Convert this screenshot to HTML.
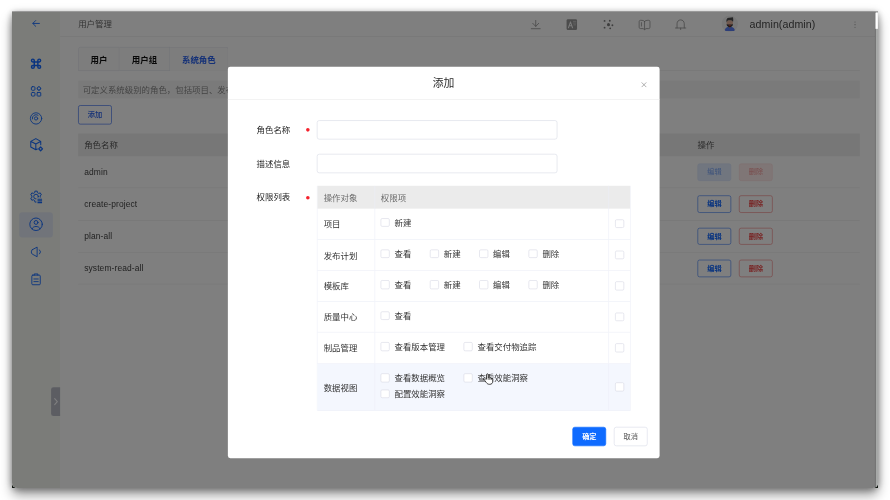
<!DOCTYPE html>
<html lang="zh-CN">
<head>
<meta charset="utf-8">
<title>用户管理</title>
<style>
*{box-sizing:border-box;margin:0;padding:0}
html,body{width:890px;height:500px;overflow:hidden;background:#fff}
body{font-family:"Liberation Sans","Noto Sans CJK SC",sans-serif;position:relative}
.win{will-change:transform;position:absolute;left:12px;top:12px;width:865.8px;height:475.8px;overflow:hidden;border-radius:0 0 5px 5px;
 box-shadow:0 7px 12px rgba(0,0,0,.40),0 1px 6px rgba(0,0,0,.26),0 0 10px rgba(0,0,0,.14);background:#fff}
.app{position:absolute;left:0;top:0;width:1440px;height:792px;transform:scale(.6013);transform-origin:0 0;font-size:14px;color:#333;background:#fff}
.abs{position:absolute}
.side{position:absolute;left:0;top:0;width:80px;height:792px;background:#f6f9f2}
.topbar{position:absolute;left:80px;top:0;width:1360px;height:41px;border-bottom:1px solid #ececec;background:#fff}
.title{position:absolute;left:30px;top:0;line-height:40px;color:#666;font-size:14px}
.tabs{position:absolute;left:110px;top:57px;height:41px;width:1300px;border-bottom:1px solid #e9e9e9}
.tab{position:absolute;top:.5px;height:40.5px;line-height:40px;text-align:center;font-weight:bold;color:#111;background:#fafafa;border:1px solid #e4e6ee;font-size:14px}
.info{position:absolute;left:110px;top:114px;width:1300px;height:30px;line-height:30px;background:#f5f5f5;color:#888;padding-left:7.5px;border-radius:2px}
.btn{position:absolute;height:32px;line-height:30px;text-align:center;border:1.3px solid;border-radius:3.5px;font-size:12px;font-weight:500}
.th{position:absolute;left:110px;top:202px;width:1300px;height:38px;background:#efefef;color:#555}
.row{position:absolute;left:110px;width:1300px;height:53.3px;border-bottom:1px solid #ececec;color:#444}
.row span,.th span{position:absolute;left:10px;top:0;line-height:53px}
.row span{letter-spacing:.2px}
.th span{line-height:38px}
.sbtn{position:absolute;top:12.2px;height:28.6px;width:56.4px;line-height:26px;text-align:center;border:1.3px solid;border-radius:3.5px;font-size:12px;font-weight:bold}
.sbtn.e{left:1030px;color:#1469ff;border-color:#3b7bf5}
.sbtn.d{left:1099px;color:#f04848;border-color:#f08080}
.sbtn.e.dis{background:#e3edff;border-color:#d5e3fb;color:#8ab0f8;font-weight:500}
.sbtn.d.dis{background:#ffecec;border-color:#fbdcdc;color:#f4a4a4;font-weight:500}
.mask{position:absolute;left:0;top:0;width:1440px;height:792px;background:rgba(0,0,0,.5)}
.modal{position:absolute;left:358.7px;top:91.3px;width:718.2px;height:650.6px;background:#fff;border-radius:4px}
.mhead{position:absolute;left:0;top:0;width:100%;height:55px;border-bottom:1px solid #ececec;text-align:center;line-height:54.6px;font-size:18px;color:#2a2a2a}
.lab{position:absolute;left:48px;width:60px;line-height:22px;color:#222}
.dot{position:absolute;left:130.5px;width:6px;height:6px;margin-top:-.5px;border-radius:50%;background:#f5222d}
.inp{position:absolute;left:148.6px;width:400px;height:32px;border:1px solid #d9dbe6;border-radius:4px;background:#fff}

.mt{position:absolute;left:148.6px;top:198.1px;width:521.6px;border-left:1px solid #eef0f8;border-right:1px solid #eef0f8}
.mr{position:relative;width:100%;border-bottom:1px solid #eceef7;height:51.55px}
.mr.h{height:37.6px;background:#ebebeb;color:#6b6b6b;border-bottom:0}
.mr.hv{background:#f4f7fe;height:78.6px}
.c1{position:absolute;left:0;top:0;bottom:0;width:95.5px;border-right:1px solid #eceef7;padding-left:10px;display:flex;align-items:center}
.c2{position:absolute;left:95.5px;top:0;bottom:0;width:389px;padding-left:9.6px;display:flex;align-items:center;flex-wrap:wrap;align-content:center}
.c3{position:absolute;left:484px;top:0;bottom:0;right:0;border-left:1px solid #eceef7;display:flex;align-items:center;justify-content:center}
.it{display:inline-flex;align-items:center;margin-right:31.2px;height:26.3px;position:relative;top:-2px;color:#333}
.it .cb{margin-right:8.5px}
.cb{display:inline-block;width:14.3px;height:14.3px;border:1px solid #d6d9e4;border-radius:2.5px;background:#fff;flex:none}
.mbtn{position:absolute;top:598.6px;height:32px;line-height:30px;text-align:center;border-radius:4px;font-size:12px;border:1px solid}
</style>
</head>
<body>
<div class="abs" style="left:12px;top:482.8px;width:5px;height:5px;background:#1c241c"></div>
<div class="abs" style="left:872.8px;top:482.8px;width:5px;height:5px;background:#1c241c"></div>
<div class="abs" style="left:12px;top:11.4px;width:865.8px;height:1px;background:rgba(0,0,0,.28)"></div>
<div class="win">
<div class="app">
  <div class="side">
<svg class="abs" style="left:26.4px;top:5.4px" width="28" height="28" viewBox="-14 -14 28 28" fill="none" stroke="#1469ff" stroke-width="1.5" stroke-linecap="round" stroke-linejoin="round"><path d="M5.6 0H-5.2M-0.6 -4.8L-5.4 0L-0.6 4.8"/></svg>
<svg class="abs" style="left:26px;top:72.4px" width="28" height="28" viewBox="-14 -14 28 28" fill="none" stroke="#1469ff" stroke-width="1.6" stroke-linecap="round" stroke-linejoin="round"><path d="M-3 -5.3A2.3 2.3 0 1 0 -5.3 -3H5.3A2.3 2.3 0 1 0 3 -5.3V5.3A2.3 2.3 0 1 0 5.3 3H-5.3A2.3 2.3 0 1 0 -3 5.3Z" stroke-width="2.4"/></svg>
<svg class="abs" style="left:26px;top:118.3px" width="28" height="28" viewBox="-14 -14 28 28" fill="none" stroke="#1469ff" stroke-width="1.6" stroke-linecap="round" stroke-linejoin="round"><rect x="-7.8" y="-7.8" width="6" height="6" rx="1.7"/><rect x="-7.8" y="1.8" width="6" height="6" rx="1.7"/><rect x="1.8" y="1.8" width="6" height="6" rx=".8"/><rect x="2.3" y="-7.3" width="5" height="5" rx="1" transform="rotate(45 4.8 -4.8)"/></svg>
<svg class="abs" style="left:26px;top:162.6px" width="28" height="28" viewBox="-14 -14 28 28" fill="none" stroke="#1469ff" stroke-width="1.5" stroke-linecap="round" stroke-linejoin="round"><circle r="9.4"/><circle r="2.7"/><path d="M-6.2 0.8A6.3 6.3 0 0 1 3.2 -5.4"/></svg>
<svg class="abs" style="left:26px;top:206.4px" width="28" height="28" viewBox="-14 -14 28 28" fill="none" stroke="#1469ff" stroke-width="1.7" stroke-linecap="round" stroke-linejoin="round"><path d="M7.8 0.8V-4.9L-0.4 -9.5L-8.8 -4.9V4.6L-0.4 9.2L2.2 7.8M-8.4 -4.6L-0.4 -0.6L7.4 -4.6M-0.4 -0.6V9"/><path d="M7.6 4.4L10.8 7.6L7.6 10.8L4.4 7.6Z" stroke-width="2.1"/></svg>
<svg class="abs" style="left:26px;top:293px" width="28" height="28" viewBox="-14 -14 28 28" fill="none" stroke="#1469ff" stroke-width="1.6" stroke-linecap="round" stroke-linejoin="round"><path d="M2.16 6.66 L1.93 9.10 L-1.93 9.10 L-2.16 6.66 L-4.68 5.20 L-6.91 6.22 L-8.84 2.87 L-6.85 1.46 L-6.85 -1.46 L-8.84 -2.87 L-6.91 -6.22 L-4.68 -5.20 L-2.16 -6.66 L-1.93 -9.10 L1.93 -9.10 L2.16 -6.66 L4.68 -5.20 L6.91 -6.22 L8.84 -2.87 L6.85 -1.46 L6.85 1.46 L8.84 2.87 L6.91 6.22 L4.68 5.20Z"/><circle r="3.9"/><rect x="0.6" y="1.6" width="12" height="12" fill="#f6f9f2" stroke="none"/><path d="M2.4 4.4H10M2.4 7.2H10M2.4 10H10" stroke-width="1.9" stroke-linecap="butt"/></svg>
<div class="abs" style="left:11.8px;top:333px;width:56.4px;height:41.6px;border-radius:5px;background:#e3e9f4"></div>
<svg class="abs" style="left:26px;top:339.2px" width="28" height="28" viewBox="-14 -14 28 28" fill="none" stroke="#1469ff" stroke-width="1.6" stroke-linecap="round" stroke-linejoin="round"><circle r="10.4"/><circle cy="-3" r="3.2"/><path d="M-6.6 7.6C-5.6 2.2 5.6 2.2 6.6 7.6"/></svg>
<svg class="abs" style="left:27.4px;top:385px" width="28" height="28" viewBox="-14 -14 28 28" fill="none" stroke="#1469ff" stroke-width="1.5" stroke-linecap="round" stroke-linejoin="round"><path d="M-7.4 -3.6L0.8 -8V8L-7.4 3.6C-9.4 2.4 -9.4 -2.4 -7.4 -3.6Z"/><path d="M4.8 -3.4A4.6 4.6 0 0 1 4.8 3.4"/></svg>
<svg class="abs" style="left:26px;top:430.7px" width="28" height="28" viewBox="-14 -14 28 28" fill="none" stroke="#1469ff" stroke-width="1.5" stroke-linecap="round" stroke-linejoin="round"><rect x="-7" y="-7.4" width="14" height="16" rx="1.6"/><path d="M-3 -7.4V-9.4H3V-7.4" /><path d="M-3.6 -1H3.6M-3.6 3.4H3.6"/></svg>
<div class="abs" style="left:65px;top:624px;width:15px;height:48px;border-radius:4px 0 0 4px;background:#b9bbc5"></div>
<svg class="abs" style="left:67px;top:640px" width="12" height="16" viewBox="0 0 12 16" fill="none" stroke="#fff" stroke-width="1.7" stroke-linecap="round" stroke-linejoin="round"><path d="M4 3L8.4 8L4 13"/></svg>
</div>
  <div class="topbar"><div class="title">用户管理</div>
<svg class="abs" style="left:776.5px;top:6.5px" width="28" height="28" viewBox="-14.0 -14.0 28 28" fill="none" stroke="#8e8e8e" stroke-width="1.3" stroke-linecap="round" stroke-linejoin="round"><path d="M0 -7V2.8M-5 -2.2L0 3L5 -2.2M-7.4 6.8H7.4"/></svg>
<svg class="abs" style="left:837.4px;top:6.7px" width="28" height="28" viewBox="-14.0 -14.0 28 28" fill="none" stroke="#8e8e8e" stroke-width="1.3" stroke-linecap="round" stroke-linejoin="round"><rect x="-8.7" y="-8.9" width="17.4" height="17.8" rx="2.2" fill="#989898" stroke="none"/><path d="M-5.6 5.2L-2.2 -4.6L1.2 5.2M-4.4 2H0" stroke="#f4f4f4" stroke-width="1.7"/><path d="M2.6 -5.4H6.8M2.6 -2.6H6.8M3.4 0.4H6.4" stroke="#d8d8d8" stroke-width="1.1"/></svg>
<svg class="abs" style="left:898.0px;top:7.100000000000001px" width="28" height="28" viewBox="-14.0 -14.0 28 28" fill="none" stroke="#8e8e8e" stroke-width="1.3" stroke-linecap="round" stroke-linejoin="round"><circle r="2.5" fill="#7c7c7c" stroke="none"/><circle cx="-6.5" cy="-6.2" r="1.55" fill="#7c7c7c" stroke="none"/><circle cx="2.2" cy="-6.5" r="1.55" fill="#7c7c7c" stroke="none"/><circle cx="6.5" cy="1" r="1.55" fill="#7c7c7c" stroke="none"/><circle cx="2.8" cy="6.2" r="1.55" fill="#7c7c7c" stroke="none"/><circle cx="-6.5" cy="5" r="1.55" fill="#7c7c7c" stroke="none"/></svg>
<svg class="abs" style="left:957.9000000000001px;top:6.800000000000001px" width="28" height="28" viewBox="-14.0 -14.0 28 28" fill="none" stroke="#8e8e8e" stroke-width="1.25" stroke-linecap="round" stroke-linejoin="round"><path d="M0 -5.4C-1 -6.8 -3 -7.2 -6.6 -7.2C-8.2 -7.2 -9 -6.4 -9 -5V4.4C-9 5.8 -8.2 6.6 -6.6 6.6H-2.4L0 8.4L2.4 6.6H6.6C8.2 6.6 9 5.8 9 4.4V-5C9 -6.4 8.2 -7.2 6.6 -7.2C3 -7.2 1 -6.8 0 -5.4ZM0 -5.4V8M-5.2 -3.4V2.4"/></svg>
<svg class="abs" style="left:1018.0999999999999px;top:7.0px" width="28" height="28" viewBox="-14.0 -14.0 28 28" fill="none" stroke="#8e8e8e" stroke-width="1.3" stroke-linecap="round" stroke-linejoin="round"><path d="M-6 5.4V-1.4C-6 -5.4 -3.4 -7.8 0 -7.8C3.4 -7.8 6 -5.4 6 -1.4V5.4M-8.6 5.6H8.6M0 5.8V8.2"/></svg>
<svg class="abs" style="left:1100.4px;top:5.8px" width="27.4" height="27.4" viewBox="-13.7 -13.7 27.4 27.4"><defs><clipPath id="av"><circle r="13.7"/></clipPath></defs><circle r="13.7" fill="#f1f1f1"/><g clip-path="url(#av)"><path d="M-8.6 12C-8 6.6 -4.6 5 0 5C4.6 5 8 6.6 8.6 12Z" fill="#5a7cf0"/><path d="M-1.8 4.6H1.8L0 7.4Z" fill="#e89a4a"/><rect x="-5.2" y="-6" width="10.4" height="9.4" rx="3.6" fill="#e2b29c"/><path d="M-5.4 -2.4C-6.4 -7 -4.6 -10.4 -1 -10.2L5.4 -10.8C6 -8.2 6 -5.2 5.4 -2.6C4.8 -5 3.2 -6 0 -6C-3.2 -6 -4.8 -5 -5.4 -2.4Z" fill="#4c4c4e"/><path d="M-5.2 0.4C-5.2 4 -3 5.6 0 5.6C3 5.6 5.2 4 5.2 0.4C3.6 1.6 -3.6 1.6 -5.2 0.4Z" fill="#3a3a3c"/><rect x="-2" y="2" width="4" height="1.4" rx=".7" fill="#c8322c"/></g></svg>
<div class="abs" style="left:1146.7px;top:0;line-height:41.5px;font-size:17.7px;color:#4a4a4a;letter-spacing:.1px">admin(admin)</div>
<svg class="abs" style="left:1308.1px;top:7.399999999999999px" width="28" height="28" viewBox="-14.0 -14.0 28 28" fill="none" stroke="#8e8e8e" stroke-width="1.3" stroke-linecap="round" stroke-linejoin="round"><circle cy="-4.4" r="1" fill="#a0a0a0" stroke="none"/><circle r="1" fill="#a0a0a0" stroke="none"/><circle cy="4.4" r="1" fill="#a0a0a0" stroke="none"/></svg>
</div>
  <div class="tabs">
    <div class="tab" style="left:0;width:69px;border-radius:4px 0 0 0">用户</div>
    <div class="tab" style="left:69px;width:83.5px;border-left:0">用户组</div>
    <div class="tab" style="left:152.5px;width:97.5px;border-left:0;color:#2a62ee;border-bottom-color:#fafafa;border-radius:0 4px 0 0">系统角色</div>
  </div>
  <div class="info">可定义系统级别的角色，包括项目、发布计划、模板库等的权限</div>
  <div class="btn" style="left:110px;top:155px;width:56px;color:#2a62ee;border-color:#2a62ee;background:#fff">添加</div>
  <div class="th"><span>角色名称</span><span style="left:1030px">操作</span></div>
  <div class="row" style="top:240px"><span>admin</span><div class="sbtn e dis">编辑</div><div class="sbtn d dis">删除</div></div>
  <div class="row" style="top:293.3px"><span>create-project</span><div class="sbtn e">编辑</div><div class="sbtn d">删除</div></div>
  <div class="row" style="top:346.6px"><span>plan-all</span><div class="sbtn e">编辑</div><div class="sbtn d">删除</div></div>
  <div class="row" style="top:399.9px"><span>system-read-all</span><div class="sbtn e">编辑</div><div class="sbtn d">删除</div></div>
  <div class="mask"></div>
  <div class="modal">
    <div class="mhead">添加</div>

    <div class="lab" style="top:93.9px">角色名称</div><div class="dot" style="top:102.5px"></div>
    <div class="inp" style="top:89px"></div>
    <div class="lab" style="top:149.9px">描述信息</div>
    <div class="inp" style="top:145px"></div>
    <div class="lab" style="top:206.2px">权限列表</div><div class="dot" style="top:214.8px"></div>
<div class="mt">
<div class="mr h"><div class="c1">操作对象</div><div class="c2">权限项</div><div class="c3"></div></div>
<div class="mr"><div class="c1">项目</div><div class="c2"><span class="it"><i class="cb"></i>新建</span></div><div class="c3"><i class="cb"></i></div></div>
<div class="mr"><div class="c1">发布计划</div><div class="c2"><span class="it"><i class="cb"></i>查看</span><span class="it"><i class="cb"></i>新建</span><span class="it"><i class="cb"></i>编辑</span><span class="it"><i class="cb"></i>删除</span></div><div class="c3"><i class="cb"></i></div></div>
<div class="mr"><div class="c1">模板库</div><div class="c2"><span class="it"><i class="cb"></i>查看</span><span class="it"><i class="cb"></i>新建</span><span class="it"><i class="cb"></i>编辑</span><span class="it"><i class="cb"></i>删除</span></div><div class="c3"><i class="cb"></i></div></div>
<div class="mr"><div class="c1">质量中心</div><div class="c2"><span class="it"><i class="cb"></i>查看</span></div><div class="c3"><i class="cb"></i></div></div>
<div class="mr"><div class="c1">制品管理</div><div class="c2"><span class="it"><i class="cb"></i>查看版本管理</span><span class="it"><i class="cb"></i>查看交付物追踪</span></div><div class="c3"><i class="cb"></i></div></div>
<div class="mr hv"><div class="c1">数据视图</div><div class="c2"><span class="it"><i class="cb"></i>查看数据概览</span><span class="it"><i class="cb"></i>查看效能洞察</span><span class="it"><i class="cb"></i>配置效能洞察</span></div><div class="c3"><i class="cb"></i></div></div>
</div>

    <svg class="abs" style="left:686.3px;top:24.1px" width="12" height="12" viewBox="-6 -6 12 12" fill="none" stroke="#9a9a9a" stroke-width="1.3" stroke-linecap="round"><path d="M-3.4 -3.4L3.4 3.4M3.4 -3.4L-3.4 3.4"/></svg>
    <svg class="abs" style="left:424px;top:509px" width="20" height="21" viewBox="0 0 20 21"><path d="M6.2 10.6V3.2C6.2 1.2 9 1.2 9 3.2V8.2C9 6.6 11.6 6.7 11.6 8.4V9.2C11.7 7.7 14.1 7.9 14.1 9.4V10.2C14.3 8.9 16.5 9.1 16.5 10.6V14.2C16.5 17.4 14.6 19.2 11.4 19.2C8.6 19.2 7.2 18.2 5.6 16L2.6 12C1.6 10.6 3.4 9.2 4.6 10.4Z" fill="#fff" stroke="#111" stroke-width="1.3" stroke-linejoin="round"/><path d="M9 8.4V11.6M11.6 9.4V11.8M14.1 10.2V12" stroke="#111" stroke-width="1" fill="none"/></svg>
    <div class="mbtn" style="left:573.8px;width:55.4px;background:#0f6bff;border-color:#0f6bff;color:#fff;font-weight:bold">确定</div>
    <div class="mbtn" style="left:642.6px;width:55.7px;background:#fff;border-color:#d9dce8;color:#555">取消</div>
  </div>
  <div class="abs" style="left:1435.2px;top:0;width:1.4px;height:792px;background:#757575"></div>
  <div class="abs" style="left:1436.6px;top:0;width:3.4px;height:792px;background:#aaacab"></div>
  <div class="abs" style="left:1436.4px;top:1px;width:3.6px;height:27.4px;background:#fff"></div>
</div>
</div>
</body>
</html>
